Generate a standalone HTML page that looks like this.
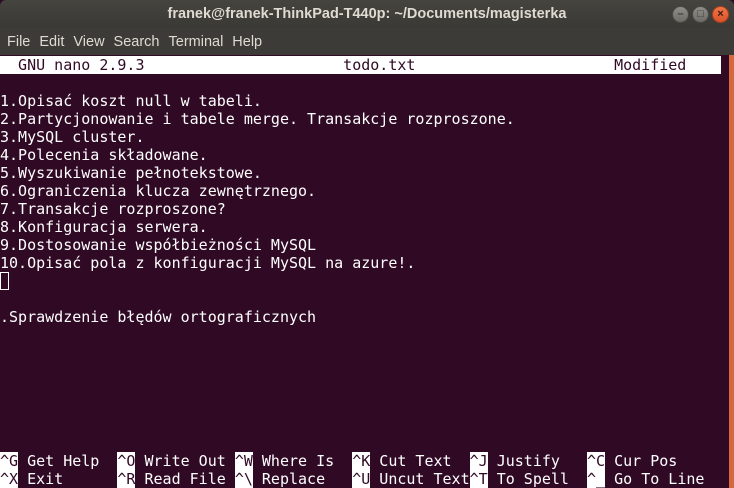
<!DOCTYPE html>
<html><head><meta charset="utf-8"><style>
body{margin:0;width:734px;height:488px;overflow:hidden;background:#300a24;position:relative;font-family:"Liberation Sans",sans-serif}
#title{position:absolute;left:0;top:0;width:734px;height:28px;background:linear-gradient(#45443f,#3a3935);color:#dfdbd2;font-weight:bold;font-size:14.5px;text-align:center;line-height:28px;border-radius:6px 6px 0 0}
#menu{position:absolute;left:0;top:28px;width:734px;height:27px;background:#3c3b37;color:#dfdbd2;font-size:14.5px;line-height:28px}
#menu span{margin-left:7px;margin-right:2px}
.btn{position:absolute;top:6px;width:17px;height:17px;border-radius:50%;background:linear-gradient(#8f8e89,#6d6c67);border:1px solid #4a4945;box-sizing:border-box;color:#3a3935;font-size:11px;line-height:15px;text-align:center;font-weight:bold}
#term{position:absolute;left:0;top:55px;width:734px;height:433px}
.r{position:absolute;left:0;height:18px;line-height:18px;font-family:"DejaVu Sans Mono",monospace;font-size:15px;color:#fff;white-space:pre}
.inv{background:#fff;color:#300a24}
</style></head><body>
<div id="title">franek@franek-ThinkPad-T440p: ~/Documents/magisterka</div>
<div class="btn" style="left:672px">–</div><div class="btn" style="left:692px">□</div><div class="btn" style="left:712px;background:linear-gradient(#f07546,#d9522a);border-color:#a8401f;color:#3a1a10">×</div>
<div id="menu"><span>File</span><span>Edit</span><span>View</span><span>Search</span><span>Terminal</span><span>Help</span></div>
<div id="term">
<div class="r inv" style="top:1px;width:721px">  GNU nano 2.9.3                      todo.txt                      Modified  </div>
<div class="r" style="top:37px">1.Opisać koszt null w tabeli.</div>
<div class="r" style="top:55px">2.Partycjonowanie i tabele merge. Transakcje rozproszone.</div>
<div class="r" style="top:73px">3.MySQL cluster.</div>
<div class="r" style="top:91px">4.Polecenia składowane.</div>
<div class="r" style="top:109px">5.Wyszukiwanie pełnotekstowe.</div>
<div class="r" style="top:127px">6.Ograniczenia klucza zewnętrznego.</div>
<div class="r" style="top:145px">7.Transakcje rozproszone?</div>
<div class="r" style="top:163px">8.Konfiguracja serwera.</div>
<div class="r" style="top:181px">9.Dostosowanie współbieżności MySQL</div>
<div class="r" style="top:199px">10.Opisać pola z konfiguracji MySQL na azure!.</div>
<div style="position:absolute;left:0;top:217px;width:9px;height:18px;border:1px solid #fff;box-sizing:border-box"></div>
<div class="r" style="top:253px">.Sprawdzenie błędów ortograficznych</div>
<div class="r" style="top:397px"><span class="inv">^G</span> Get Help  <span class="inv">^O</span> Write Out <span class="inv">^W</span> Where Is  <span class="inv">^K</span> Cut Text  <span class="inv">^J</span> Justify   <span class="inv">^C</span> Cur Pos</div>
<div class="r" style="top:415px"><span class="inv">^X</span> Exit      <span class="inv">^R</span> Read File <span class="inv">^\</span> Replace   <span class="inv">^U</span> Uncut Text<span class="inv">^T</span> To Spell  <span class="inv">^_</span> Go To Line</div>
</div>
<div style="position:absolute;right:0;top:55px;width:5px;height:433px;background:#d6683e"></div>
</body></html>
